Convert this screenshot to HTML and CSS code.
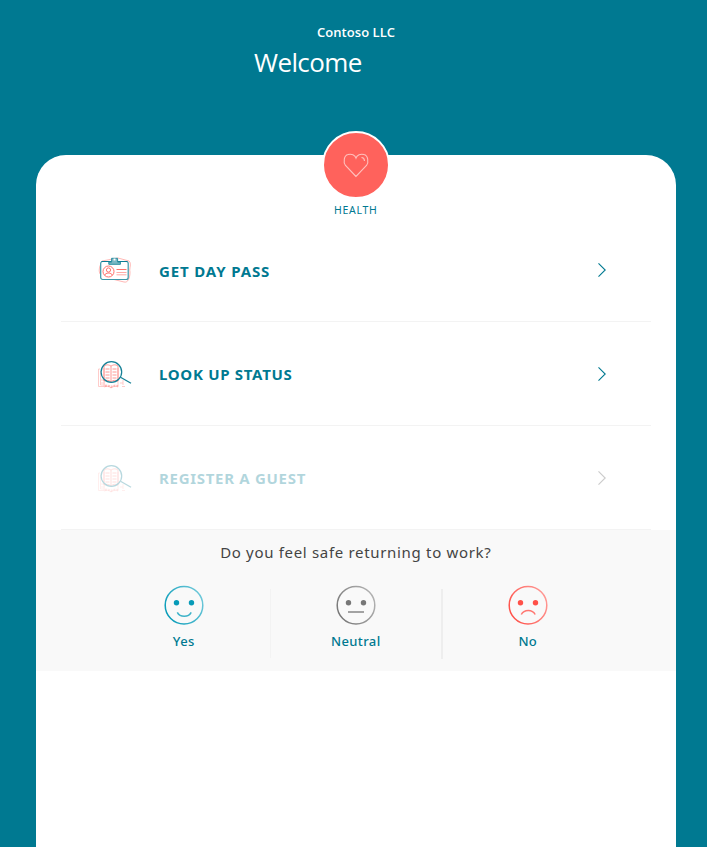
FILE: index.html
```html
<!DOCTYPE html>
<html lang="en">
<head>
<meta charset="utf-8">
<title>Contoso LLC</title>
<link rel="stylesheet" href="styles.css">
</head>
<body>
<svg class="defs" aria-hidden="true">
  <defs>
    <linearGradient id="blue" x1="0" y1="0.7" x2="1" y2="0.2"><stop offset="0" stop-color="#079bb8"/><stop offset="1" stop-color="#72cadb"/></linearGradient>
    <linearGradient id="gray" x1="0" y1="0.7" x2="1" y2="0.2"><stop offset="0" stop-color="#777"/><stop offset="1" stop-color="#b5b5b5"/></linearGradient>
    <linearGradient id="red" x1="0" y1="0.7" x2="1" y2="0.2"><stop offset="0" stop-color="#ff5048"/><stop offset="1" stop-color="#ff9c98"/></linearGradient>
    <symbol id="lens" viewBox="0 0 40 34">
      <g fill="none" stroke="#ff625c">
        <g stroke-width=".8" opacity=".4">
          <path d="M4 10H2.500v17.500h7M26 27.500h3M4.500 12v14h5M27 21v5"/>
          <path d="M8 9v19c3-1 5-1 7 1c2-2 5-2 7-1V9M5 24h4M5 21h4M24 24h3"/>
        </g>
        <path stroke-width="2" stroke-dasharray="2 1" opacity=".4" d="M9 27c3-1 4 0 6 1c2-1 4-2 7-1"/>
        <g stroke-width="1" opacity=".65">
          <path d="M8 22V7c3-2 5-1 7 0c2-1 4-2 7 0v15c-3-1-5-1-7 1c-2-2-4-2-7-1M15 7v16"/>
          <path d="M9.500 10h4M9.500 13h4M9.500 16h4M9.500 19h4M16.500 10h4M16.500 13h4M16.500 16h4M16.500 19h4"/>
        </g>
      </g>
      <circle cx="15.400" cy="13" r="10.300" fill="none" stroke="#168096" stroke-width="1.200"/>
      <path d="M24.500 18.300L35 24.200" stroke="#168096" stroke-width="1.300"/>
    </symbol>
    <symbol id="chevron" viewBox="0 0 10 16">
      <path d="M1.500 1.300L8.200 8L1.500 14.700" fill="none" stroke="currentColor" stroke-width="1.100"/>
    </symbol>
  </defs>
</svg>
<header class="header">
  <div class="company">Contoso LLC</div>
  <div class="welcome">Welcome</div>
</header>
<main class="card">
  <div class="health">
    <div class="badge">
      <svg width="28" height="26" viewBox="0 0 28 26" fill="none" stroke="#ffc0bd" stroke-width="1.100"><path d="M14 24.500L3.500 13.500C1 10 2 3.500 6 2.500C9.500 1.500 13 3 14 6C15 3 18.500 1.500 22 2.500C26 3.500 27 10 24.500 13.500Z"/><path d="M19.500 5.500Q22.300 5.700 22.500 9"/></svg>
    </div>
    <div class="health-label">HEALTH</div>
  </div>
  <div class="menu">
    <div class="row first">
      <svg class="icon" width="40" height="34" viewBox="0 0 40 34" fill="none">
        <path d="M6 6L22 3L33 6C36 9 33 13 34 17C34 23 32 28 28 27L8 22C2 20 3 14 4 11Z" stroke="#ff625c" opacity=".45"/>
        <rect x="4.700" y="6.500" width="27.500" height="18" rx="2" fill="#fff" stroke="#3c96a8" stroke-width="1.200"/>
        <path d="M5.500 6.500h26" stroke="#0b7c94"/>
        <path d="M12.800 9.300h11.600v-2.200h-2.800v-3.800h-6v3.800h-2.800z" fill="#79b8c4" stroke="#2e8fa2"/>
        <path d="M17.500 3.500h2v2h-2z" fill="#fff"/>
        <g stroke="#ff625c" stroke-width=".9"><circle cx="12.500" cy="16.500" r="5.500"/><circle cx="12.500" cy="15" r="2.100"/><path d="M8.700 20.300c.5-3 7-3 7.600 0"/><path d="M20.500 14.500h10"/><path d="M20.500 17.500h10M20.500 19.800h10" opacity=".6"/></g>
      </svg>
      <span class="label pass">GET DAY PASS</span>
      <svg class="arrow" width="10" height="16"><use href="#chevron"/></svg>
    </div>
    <div class="row">
      <svg class="icon" width="40" height="34"><use href="#lens"/></svg>
      <span class="label status">LOOK UP STATUS</span>
      <svg class="arrow" width="10" height="16"><use href="#chevron"/></svg>
    </div>
    <div class="row disabled">
      <svg class="icon" width="40" height="34"><use href="#lens"/></svg>
      <span class="label guest">REGISTER A GUEST</span>
      <svg class="arrow" width="10" height="16"><use href="#chevron"/></svg>
    </div>
  </div>
  <section class="survey">
    <div class="question">Do you feel safe returning to work?</div>
    <div class="choices">
      <div class="choice">
        <svg width="40" height="40" viewBox="0 0 40 40" fill="none" stroke="url(#blue)" stroke-width="1.500"><circle cx="20" cy="20.300" r="18.800"/><path d="M13.300 27.300C16 32.600 24.500 32.600 27.200 27.300" stroke="#3fb3c9"/><g fill="#079bb8" stroke="none"><circle cx="12.500" cy="17.800" r="2.700"/><circle cx="27.500" cy="17.800" r="2.700"/></g></svg>
        <span class="yes">Yes</span>
      </div>
      <div class="choice light-rule">
        <svg width="40" height="40" viewBox="0 0 40 40" fill="none" stroke="url(#gray)" stroke-width="1.500"><circle cx="20" cy="20.300" r="18.800"/><path d="M12 27h16" stroke="#999" stroke-width="1.800"/><g fill="#777" stroke="none"><circle cx="12.500" cy="17.800" r="2.700"/><circle cx="27.500" cy="17.800" r="2.700"/></g></svg>
        <span class="neutral">Neutral</span>
      </div>
      <div class="choice rule">
        <svg width="40" height="40" viewBox="0 0 40 40" fill="none" stroke="url(#red)" stroke-width="1.500"><circle cx="20" cy="20.300" r="18.800"/><path d="M13.300 29.500C16 24 24.500 24 27.200 29.500" stroke="#ff7771"/><g fill="#ff5048" stroke="none"><circle cx="12.500" cy="17.800" r="2.700"/><circle cx="27.500" cy="17.800" r="2.700"/></g></svg>
        <span class="no">No</span>
      </div>
    </div>
  </section>
</main>
</body>
</html>
```
FILE: styles.css
```css
* { box-sizing: border-box; }
body {
  margin: 0;
  height: 847px;
  overflow: hidden;
  background: #007991;
  font-family: "Noto Sans", "Open Sans", sans-serif;
  color: #007991;
}
svg { display: block; flex: none; }
.defs { position: absolute; width: 0; height: 0; }
.header { height: 155px; padding-top: 22px; color: #fff; white-space: nowrap; }
.company { padding-left: 317px; font-family: "Open Sans", sans-serif; font-size: 13px; line-height: 20px; font-weight: 600; letter-spacing: 0.05px; }
.welcome { padding-left: 254px; font-family: "Open Sans", sans-serif; font-size: 26px; line-height: 40px; letter-spacing: -0.6px; }
.card {
  width: 639.6px;
  height: 720px;
  margin-left: 36px;
  background: #fff;
  border-radius: 30px 30px 0 0;
}
.health { display: flex; flex-direction: column; align-items: center; height: 63px; }
.badge {
  display: flex;
  align-items: center;
  justify-content: center;
  flex: none;
  width: 68px;
  height: 68px;
  margin-top: -24px;
  border: 2px solid #fff;
  border-radius: 50%;
  background: #ff625c;
}
.health-label { margin-top: 3px; font-size: 10.5px; line-height: 16px; letter-spacing: 0.7px; }
.menu { padding: 0 25px; }
.row {
  display: flex;
  align-items: center;
  height: 104px;
  padding: 0 44px 0 35px;
  border-bottom: 1px solid #f3f3f3;
}
.icon { margin-top: 4px; }
.label { margin-left: 23px; font-size: 15px; line-height: 20px; font-weight: 700; letter-spacing: 0.7px; white-space: nowrap; }
.first .label { margin-top: 3px; }
.pass { letter-spacing: 0.87px; }
.arrow { margin-left: auto; }
.disabled .icon, .disabled .label, .disabled .arrow { opacity: 0.3; }
.disabled .arrow { color: #555; }
.survey { height: 141px; background: #f9f9f9; }
.question { padding-top: 12px; font-size: 15px; line-height: 20px; text-align: center; letter-spacing: 0.68px; color: #444; }
.choices { display: grid; grid-template-columns: repeat(3, 172px); justify-content: center; margin-top: 23px; }
.choice { display: flex; flex-direction: column; align-items: center; height: 74px; font-size: 13px; line-height: 18px; }
.choice span { margin-top: 7px; letter-spacing: 0.4px; font-weight: 500; }
.light-rule { background: linear-gradient(#f3f3f3, #f3f3f3) 0 4px / 1px 69px no-repeat; }
.rule { margin-left: -1px; padding-left: 1px; background: linear-gradient(#eee, #eee) 0 4px / 2px 70px no-repeat; }
```
